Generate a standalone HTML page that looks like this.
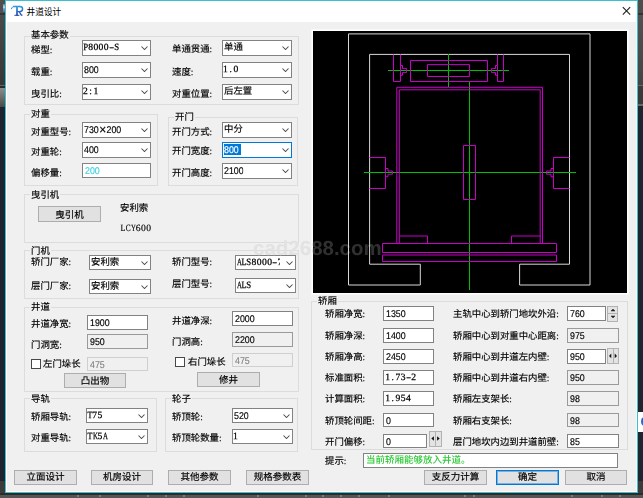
<!DOCTYPE html><html lang="zh-CN"><head><meta charset="utf-8"><title>井道设计</title><style>
html,body{margin:0;padding:0}
body{width:643px;height:498px;overflow:hidden;position:relative;background:#3c3c3c;font-family:"Liberation Sans","Noto Sans CJK SC",sans-serif;font-size:12px;color:#000}
div,span,svg{position:absolute;box-sizing:border-box}
.bg{left:0;top:0;width:643px;height:498px}
.win{left:5px;top:0;width:633px;height:493px;background:#f0f0f0;border:1px solid #3cc0cb}
.frame{left:6px;top:1px;width:631px;height:491px;border:1px solid #fff;border-top:none}
.title{left:6px;top:1px;width:631px;height:21px;background:#fff}
.tt{left:26.5px;top:4.5px;font:8.7px/14px "Liberation Sans","Noto Sans CJK SC",sans-serif;white-space:nowrap}
.l{font:9.4px/12px "Liberation Serif","Noto Sans CJK SC",sans-serif;white-space:nowrap;color:#000;letter-spacing:0}
.g{border:1px solid #dcdcdc;border-radius:0}
.gl{font:9.4px/12px "Liberation Serif","Noto Sans CJK SC",sans-serif;background:#f0f0f0;white-space:nowrap;padding:0 1px}
.cb{background:#fff;border:1px solid #828282}
.cb.f{border-color:#0078d7}
.tb{background:#fff;border:1px solid #828282}
.tb.d{background:#f0f0f0;border-color:#9a9a9a}
.tb.dd{background:#f0f0f0;border-color:#cfcfcf;color:#838383}
.v{left:1px;top:-1px;white-space:nowrap}
.vs{font:9.6px/13px "Liberation Serif","Noto Sans CJK SC",serif;top:-0.5px;left:-0.2px;-webkit-text-stroke:0.25px #000}
.cb .v{max-width:calc(100% - 14.5px);overflow:hidden;height:13px}
.vc{font:9.4px/13px "Liberation Serif","Noto Sans CJK SC",sans-serif;top:1.2px !important}
.vs i,.l i{position:static;display:inline-block;font-style:normal;text-align:center}
.vs b,.l b{position:static;display:inline-block;font-weight:normal}
.vn{font:9.6px/13px "Liberation Sans","Noto Sans CJK SC",sans-serif;top:0.5px;-webkit-text-stroke:0.15px currentColor;transform:scale(0.92,1.02);transform-origin:0 60%}
.tb .vn{left:2px}
.tb .vs{left:1px;top:-0.3px}
.vn i{position:static;display:inline-block;font-style:normal;text-align:center}
.btn{background:#e1e1e1;border:1px solid #adadad;text-align:center;font:9.5px/14px "Liberation Serif","Noto Sans CJK SC",sans-serif;white-space:nowrap}
.btn.def{border:1px solid #0078d7;box-shadow:inset 0 0 0 1px rgba(0,120,215,.45)}
.l,.gl,.btn,.vc{-webkit-text-stroke:0.16px #000}
.chk{background:#fff;border:1px solid #484848}
.sp{background:#e3e3e3;border:1px solid #b2b2b2}
</style></head><body>
<div class="bg">
<div style="left:0;top:0;width:5px;height:13px;background:#4f4f4f"></div>
<div style="left:0;top:13px;width:5px;height:2px;background:#343434"></div>
<div style="left:0;top:15px;width:5px;height:70px;background:linear-gradient(#4b4a4a,#373737)"></div>
<div style="left:0;top:85px;width:5px;height:1px;background:#646464"></div>
<div style="left:0;top:86px;width:5px;height:2px;background:#2a2a2a"></div>
<div style="left:0;top:88px;width:5px;height:19px;background:linear-gradient(#8c8c8c,#4a4a4a)"></div>
<div style="left:0;top:107px;width:5px;height:374px;background:#1f2530"></div>
<div style="left:0;top:481px;width:5px;height:17px;background:#3b3b3b"></div>
<div style="left:3px;top:4px;width:2px;height:8px;background:linear-gradient(#6f7f9f,#cfd6e4 40%,#7f93bf 60%,#55699a)"></div>
<div style="left:638px;top:0;width:5px;height:13px;background:#4d4d4d"></div>
<div style="left:638px;top:13px;width:5px;height:2px;background:#333"></div>
<div style="left:638px;top:15px;width:5px;height:70px;background:linear-gradient(#525252,#444)"></div>
<div style="left:638px;top:85px;width:5px;height:1px;background:#666"></div>
<div style="left:638px;top:86px;width:5px;height:18px;background:#3a3a3a"></div>
<div style="left:638px;top:104px;width:5px;height:2px;background:#6a6a6a"></div>
<div style="left:638px;top:106px;width:5px;height:375px;background:#1f2530"></div>
<div style="left:638px;top:481px;width:5px;height:17px;background:#3b3b3b"></div>
<div style="left:638px;top:412px;width:5px;height:20px;background:#fff;overflow:hidden"><div style="left:3px;top:5px;width:7px;height:9px;border-radius:50%;background:#1d6ae5"></div></div>
<div style="left:0;top:493px;width:643px;height:2px;background:#2b2b2b"></div>
<div style="left:0;top:495px;width:643px;height:3px;background:#555"></div>
<div style="left:77px;top:495px;width:2px;height:2px;background:#7c7c7c"></div><div style="left:99px;top:495px;width:2px;height:2px;background:#7c7c7c"></div><div style="left:147px;top:495px;width:2px;height:2px;background:#7c7c7c"></div><div style="left:165px;top:495px;width:2px;height:2px;background:#7c7c7c"></div><div style="left:183px;top:495px;width:2px;height:2px;background:#7c7c7c"></div><div style="left:257px;top:495px;width:2px;height:2px;background:#7c7c7c"></div><div style="left:305px;top:495px;width:2px;height:2px;background:#7c7c7c"></div><div style="left:322px;top:495px;width:2px;height:2px;background:#7c7c7c"></div><div style="left:340px;top:495px;width:2px;height:2px;background:#7c7c7c"></div><div style="left:358px;top:495px;width:2px;height:2px;background:#7c7c7c"></div><div style="left:388px;top:495px;width:2px;height:2px;background:#7c7c7c"></div><div style="left:464px;top:495px;width:2px;height:2px;background:#7c7c7c"></div><div style="left:473px;top:495px;width:2px;height:2px;background:#7c7c7c"></div><div style="left:571px;top:495px;width:2px;height:2px;background:#7c7c7c"></div><div style="left:601px;top:495px;width:2px;height:2px;background:#7c7c7c"></div><div style="left:619px;top:495px;width:2px;height:2px;background:#7c7c7c"></div>
</div>
<div class="win"></div><div class="title"></div><div class="frame"></div>
<svg style="left:10px;top:4px" width="15" height="14" viewBox="10 4 15 14" fill="none"><defs><linearGradient id="tg" gradientUnits="userSpaceOnUse" x1="0" y1="6" x2="0" y2="16"><stop offset="0" stop-color="#2b9fe0"/><stop offset="1" stop-color="#2340a8"/></linearGradient></defs><g stroke="url(#tg)" stroke-linecap="round" stroke-linejoin="round"><path d="M11.5 8.7 C11.9 7.2 12.8 6.5 14.2 6.5" stroke-width="1"/><path d="M13.6 6.5 H20.2" stroke-width="1.35"/><path d="M17 6.9 V15" stroke-width="1.7"/><path d="M14.8 15.3 H19" stroke-width="1"/><path d="M19.8 6.5 C22 6.5 22.6 7.9 22.6 9.1 C22.6 10.7 21.6 11.6 19.6 11.6 H17.6" stroke-width="1.4"/><path d="M19.3 11.8 L21.4 15.1 H22" stroke-width="1.3"/></g></svg>
<div class="tt">井道设计</div>
<svg style="left:620px;top:5px" width="13" height="12" viewBox="620 5 13 12"><path d="M622.8 7.2 L630.2 14.6 M630.2 7.2 L622.8 14.6" stroke="#1c1c1c" stroke-width="1.05" fill="none"/></svg>
<div id="c" style="left:0;top:0;width:643px;height:498px;will-change:transform;text-rendering:geometricPrecision">
<div class="g" style="left:24px;top:36px;width:275px;height:69px"></div>
<div class="gl" style="left:30px;top:30px">基本参数</div>
<div class="l" style="left:31px;top:44.8px;">梯型:</div>
<div class="cb" style="left:82px;top:40px;width:69px;height:16px"><span class="v vs"><i style="width:5.2px"><b style="transform:scaleX(0.918)">P</b></i><i style="width:5.2px">8</i><i style="width:5.2px">0</i><i style="width:5.2px">0</i><i style="width:5.2px">0</i><i style="width:5.2px"><b style="transform:scaleX(1.5)">-</b></i><i style="width:5.2px"><b style="transform:scaleX(0.918)">S</b></i></span><svg style="right:2.5px;top:5.0px" width="7" height="4" viewBox="0 0 7 4"><path d="M0.5 0.5 L3.5 3.5 L6.5 0.5" stroke="#4a4a4a" stroke-width="1.05" fill="none"/></svg></div>
<div class="l" style="left:31px;top:66.8px;">载重:</div>
<div class="cb" style="left:82px;top:62px;width:69px;height:16px"><span class="v vn">800</span><svg style="right:2.5px;top:5.0px" width="7" height="4" viewBox="0 0 7 4"><path d="M0.5 0.5 L3.5 3.5 L6.5 0.5" stroke="#4a4a4a" stroke-width="1.05" fill="none"/></svg></div>
<div class="l" style="left:31px;top:88.8px;">曳引比:</div>
<div class="cb" style="left:82px;top:84px;width:69px;height:16px"><span class="v vs"><i style="width:5.2px">2</i><i style="width:5.2px">:</i><i style="width:5.2px">1</i></span><svg style="right:2.5px;top:5.0px" width="7" height="4" viewBox="0 0 7 4"><path d="M0.5 0.5 L3.5 3.5 L6.5 0.5" stroke="#4a4a4a" stroke-width="1.05" fill="none"/></svg></div>
<div class="l" style="left:172px;top:43.8px;">单通贯通:</div>
<div class="cb" style="left:222px;top:40px;width:70px;height:16px"><span class="v vc">单通</span><svg style="right:2.5px;top:5.0px" width="7" height="4" viewBox="0 0 7 4"><path d="M0.5 0.5 L3.5 3.5 L6.5 0.5" stroke="#4a4a4a" stroke-width="1.05" fill="none"/></svg></div>
<div class="l" style="left:172px;top:66.8px;">速度:</div>
<div class="cb" style="left:222px;top:62px;width:70px;height:16px"><span class="v vs"><i style="width:5.2px">1</i><i style="width:5.2px">.</i><i style="width:5.2px">0</i></span><svg style="right:2.5px;top:5.0px" width="7" height="4" viewBox="0 0 7 4"><path d="M0.5 0.5 L3.5 3.5 L6.5 0.5" stroke="#4a4a4a" stroke-width="1.05" fill="none"/></svg></div>
<div class="l" style="left:172px;top:88.8px;">对重位置:</div>
<div class="cb" style="left:222px;top:84px;width:70px;height:16px"><span class="v vc">后左置</span><svg style="right:2.5px;top:5.0px" width="7" height="4" viewBox="0 0 7 4"><path d="M0.5 0.5 L3.5 3.5 L6.5 0.5" stroke="#4a4a4a" stroke-width="1.05" fill="none"/></svg></div>
<div class="g" style="left:24px;top:114px;width:134px;height:72px"></div>
<div class="gl" style="left:30px;top:109px">对重</div>
<div class="l" style="left:31px;top:126.8px;">对重型号:</div>
<div class="cb" style="left:82px;top:122px;width:69px;height:16px"><span class="v vn">730<i style="width:8.5px;font-size:13px;line-height:10px;vertical-align:-1px">×</i>200</span><svg style="right:2.5px;top:5.0px" width="7" height="4" viewBox="0 0 7 4"><path d="M0.5 0.5 L3.5 3.5 L6.5 0.5" stroke="#4a4a4a" stroke-width="1.05" fill="none"/></svg></div>
<div class="l" style="left:31px;top:146.8px;">对重轮:</div>
<div class="cb" style="left:82px;top:142px;width:69px;height:16px"><span class="v vn">400</span><svg style="right:2.5px;top:5.0px" width="7" height="4" viewBox="0 0 7 4"><path d="M0.5 0.5 L3.5 3.5 L6.5 0.5" stroke="#4a4a4a" stroke-width="1.05" fill="none"/></svg></div>
<div class="l" style="left:31px;top:167.8px;">偏移量:</div>
<div class="tb " style="left:82px;top:163px;width:69px;height:15px"><span class="v vn" style="color:#3fd0e0;">200</span></div>
<div class="g" style="left:168px;top:117px;width:130px;height:69px"></div>
<div class="gl" style="left:174px;top:112px">开门</div>
<div class="l" style="left:172px;top:126.8px;">开门方式:</div>
<div class="cb" style="left:222px;top:122px;width:70px;height:16px"><span class="v vc">中分</span><svg style="right:2.5px;top:5.0px" width="7" height="4" viewBox="0 0 7 4"><path d="M0.5 0.5 L3.5 3.5 L6.5 0.5" stroke="#4a4a4a" stroke-width="1.05" fill="none"/></svg></div>
<div class="l" style="left:172px;top:145.8px;">开门宽度:</div>
<div class="cb f" style="left:222px;top:142px;width:70px;height:16px"><span style="left:1px;top:1px;width:17px;height:11px;background:#0078d7"></span><span class="v vn" style="color:#fff">800</span><svg style="right:2.5px;top:5.0px" width="7" height="4" viewBox="0 0 7 4"><path d="M0.5 0.5 L3.5 3.5 L6.5 0.5" stroke="#4a4a4a" stroke-width="1.05" fill="none"/></svg></div>
<div class="l" style="left:172px;top:167.8px;">开门高度:</div>
<div class="cb" style="left:222px;top:163px;width:70px;height:16px"><span class="v vn">2100</span><svg style="right:2.5px;top:5.0px" width="7" height="4" viewBox="0 0 7 4"><path d="M0.5 0.5 L3.5 3.5 L6.5 0.5" stroke="#4a4a4a" stroke-width="1.05" fill="none"/></svg></div>
<div class="g" style="left:24px;top:194px;width:275px;height:49px"></div>
<div class="gl" style="left:30px;top:190px">曳引机</div>
<div class="btn" style="left:38px;top:206px;width:63px;height:16px;padding-top:1.5px">曳引机</div>
<div class="l" style="left:120px;top:202.8px;">安利索</div>
<div class="l" style="left:120px;top:223.20000000000002px;font-size:9.6px"><i style="width:5.2px"><b style="transform:scaleX(0.835)">L</b></i><i style="width:5.2px"><b style="transform:scaleX(0.765)">C</b></i><i style="width:5.2px"><b style="transform:scaleX(0.707)">Y</b></i><i style="width:5.2px">6</i><i style="width:5.2px">0</i><i style="width:5.2px">0</i></div>
<div class="g" style="left:24px;top:250px;width:275px;height:49px"></div>
<div class="gl" style="left:30px;top:246px">门机</div>
<div class="l" style="left:31px;top:256.8px;">轿门厂家:</div>
<div class="cb" style="left:89px;top:255px;width:62px;height:15px"><span class="v vc">安利索</span><svg style="right:2.5px;top:4.5px" width="7" height="4" viewBox="0 0 7 4"><path d="M0.5 0.5 L3.5 3.5 L6.5 0.5" stroke="#4a4a4a" stroke-width="1.05" fill="none"/></svg></div>
<div class="l" style="left:31px;top:280.8px;">层门厂家:</div>
<div class="cb" style="left:89px;top:279px;width:62px;height:15px"><span class="v vc">安利索</span><svg style="right:2.5px;top:4.5px" width="7" height="4" viewBox="0 0 7 4"><path d="M0.5 0.5 L3.5 3.5 L6.5 0.5" stroke="#4a4a4a" stroke-width="1.05" fill="none"/></svg></div>
<div class="l" style="left:172px;top:256.8px;">轿门型号:</div>
<div class="cb" style="left:235px;top:255px;width:61px;height:15px"><span class="v vs"><i style="width:5.2px"><b style="transform:scaleX(0.707)">A</b></i><i style="width:5.2px"><b style="transform:scaleX(0.835)">L</b></i><i style="width:5.2px"><b style="transform:scaleX(0.918)">S</b></i><i style="width:5.2px">8</i><i style="width:5.2px">0</i><i style="width:5.2px">0</i><i style="width:5.2px">0</i><i style="width:5.2px"><b style="transform:scaleX(1.5)">-</b></i><i style="width:5.2px">7</i></span><svg style="right:2.5px;top:4.5px" width="7" height="4" viewBox="0 0 7 4"><path d="M0.5 0.5 L3.5 3.5 L6.5 0.5" stroke="#4a4a4a" stroke-width="1.05" fill="none"/></svg></div>
<div class="l" style="left:172px;top:278.8px;">层门型号:</div>
<div class="cb" style="left:235px;top:278px;width:61px;height:15px"><span class="v vs"><i style="width:5.2px"><b style="transform:scaleX(0.707)">A</b></i><i style="width:5.2px"><b style="transform:scaleX(0.835)">L</b></i><i style="width:5.2px"><b style="transform:scaleX(0.918)">S</b></i></span><svg style="right:2.5px;top:4.5px" width="7" height="4" viewBox="0 0 7 4"><path d="M0.5 0.5 L3.5 3.5 L6.5 0.5" stroke="#4a4a4a" stroke-width="1.05" fill="none"/></svg></div>
<div class="g" style="left:24px;top:307px;width:275px;height:85px"></div>
<div class="gl" style="left:30px;top:302px">井道</div>
<div class="l" style="left:31px;top:318.8px;">井道净宽:</div>
<div class="tb " style="left:87px;top:315px;width:61px;height:15px"><span class="v vn" style="">1900</span></div>
<div class="l" style="left:31px;top:339.8px;">门洞宽:</div>
<div class="tb d" style="left:87px;top:334px;width:61px;height:15px"><span class="v vn" style="">950</span></div>
<div class="chk" style="left:31px;top:359px;width:10px;height:10px"></div>
<div class="l" style="left:43px;top:358.8px;">左门垛长</div>
<div class="tb dd" style="left:87px;top:357px;width:61px;height:14px"><span class="v vn" style="">475</span></div>
<div class="btn" style="left:64px;top:373px;width:62px;height:15px;padding-top:1px">凸出物</div>
<div class="l" style="left:172px;top:315.8px;">井道净深:</div>
<div class="tb " style="left:232px;top:311px;width:61px;height:15px"><span class="v vn" style="">2000</span></div>
<div class="l" style="left:172px;top:336.8px;">门洞高:</div>
<div class="tb d" style="left:232px;top:332px;width:61px;height:15px"><span class="v vn" style="">2200</span></div>
<div class="chk" style="left:175px;top:357px;width:10px;height:10px"></div>
<div class="l" style="left:188px;top:356.8px;">右门垛长</div>
<div class="tb dd" style="left:232px;top:353px;width:61px;height:14px"><span class="v vn" style="">475</span></div>
<div class="btn" style="left:197px;top:372px;width:63px;height:15px;padding-top:0.8px">修井</div>
<div class="g" style="left:24px;top:398px;width:133px;height:54px"></div>
<div class="gl" style="left:30px;top:394px">导轨</div>
<div class="l" style="left:31px;top:411.8px;">轿厢导轨:</div>
<div class="cb" style="left:86px;top:408px;width:62px;height:15px"><span class="v vs"><i style="width:5.2px"><b style="transform:scaleX(0.835)">T</b></i><i style="width:5.2px">7</i><i style="width:5.2px">5</i></span><svg style="right:2.5px;top:4.5px" width="7" height="4" viewBox="0 0 7 4"><path d="M0.5 0.5 L3.5 3.5 L6.5 0.5" stroke="#4a4a4a" stroke-width="1.05" fill="none"/></svg></div>
<div class="l" style="left:31px;top:432.8px;">对重导轨:</div>
<div class="cb" style="left:86px;top:429px;width:62px;height:15px"><span class="v vs"><i style="width:5.2px"><b style="transform:scaleX(0.835)">T</b></i><i style="width:5.2px"><b style="transform:scaleX(0.707)">K</b></i><i style="width:5.2px">5</i><i style="width:5.2px"><b style="transform:scaleX(0.707)">A</b></i></span><svg style="right:2.5px;top:4.5px" width="7" height="4" viewBox="0 0 7 4"><path d="M0.5 0.5 L3.5 3.5 L6.5 0.5" stroke="#4a4a4a" stroke-width="1.05" fill="none"/></svg></div>
<div class="g" style="left:165px;top:398px;width:133px;height:54px"></div>
<div class="gl" style="left:171px;top:394px">轮子</div>
<div class="l" style="left:172px;top:411.8px;">轿顶轮:</div>
<div class="cb" style="left:232px;top:408px;width:61px;height:15px"><span class="v vn">520</span><svg style="right:2.5px;top:4.5px" width="7" height="4" viewBox="0 0 7 4"><path d="M0.5 0.5 L3.5 3.5 L6.5 0.5" stroke="#4a4a4a" stroke-width="1.05" fill="none"/></svg></div>
<div class="l" style="left:172px;top:432.8px;">轿顶轮数量:</div>
<div class="cb" style="left:232px;top:429px;width:61px;height:15px"><span class="v vs"><i style="width:5.2px">1</i></span><svg style="right:2.5px;top:4.5px" width="7" height="4" viewBox="0 0 7 4"><path d="M0.5 0.5 L3.5 3.5 L6.5 0.5" stroke="#4a4a4a" stroke-width="1.05" fill="none"/></svg></div>
<div class="btn" style="left:14px;top:470px;width:63px;height:15px;padding-top:0.4px">立面设计</div>
<div class="btn" style="left:91px;top:470px;width:62px;height:15px;padding-top:0.4px">机房设计</div>
<div class="btn" style="left:168px;top:470px;width:63px;height:15px;padding-top:0.4px">其他参数</div>
<div class="btn" style="left:246px;top:470px;width:63px;height:15px;padding-top:0.4px">规格参数表</div>
<div style="left:312px;top:30px;width:316px;height:264px;border:1px solid #fff;box-shadow:0 0 0 1px rgba(255,255,255,.55);background:#000"></div>
<svg style="left:313px;top:31px" width="315" height="262" viewBox="313 31 315 262" fill="none" stroke-width="1"><text x="253" y="254.9" font-family="Liberation Sans,sans-serif" font-weight="bold" font-size="20.5" fill="#303030" stroke="none">cad2688.com</text><path stroke="#d8d8d8" d="M348.5 33.9 H590 V285 H519.6 V264.2 H569.5 V54.4 H369.6 V264.2 H420.3 V285 H348.5 V33.9"/><path stroke="#00c000" d="M388 70.5 H509 M448.5 54 V87 M469.5 82 V290 M364 172.5 H576"/><path stroke="#c800c8" d="M410.5 60.5 H487.5 V81.5 H410.5 Z M427.5 64.6 H469.6 V76.5 H427.5 Z M393.5 54.5 V81.5 H400.5 V54.5 M400.5 65.5 H402.5 V68.6 H406.6 V72.4 H402.5 V75.3 H400.5 M497.5 54.5 V81.5 H503.5 V54.5 M497.5 65.5 H495.5 V68.6 H491.4 V72.4 H495.5 V75.3 H497.5 M396.8 87.3 H542.5 V243.5 H396.8 Z M399.3 243.5 V89.8 H540.2 V243.5 M399.5 236 H427.5 V243.5 M540.5 236 H511.5 V243.5 M382.5 243.5 H556.5 V252.5 H382.5 Z M382.5 255 H556.5 V261.5 H382.5 Z M463.5 145.5 H475.5 V199.5 H463.5 Z M369.5 157.5 H385.5 V188.5 H369.5 M385.5 168.5 H388 V171 H392.4 V174.2 H388 V176.7 H385.5 M569.5 157.5 H553.5 V188.5 H569.5 M553.5 168.5 H551 V171 H546.6 V174.2 H551 V176.7 H553.5"/></svg>
<svg style="left:250px;top:232px" width="63" height="30" viewBox="250 232 63 30"><text x="253" y="254.9" font-family="Liberation Sans,sans-serif" font-weight="bold" font-size="20.5" fill="#e2e2e2">cad2688.com</text></svg>
<div class="g" style="left:311px;top:301px;width:317px;height:149px"></div>
<div class="gl" style="left:317px;top:296px">轿厢</div>
<div class="l" style="left:325px;top:309.3px;">轿厢净宽:</div>
<div class="tb " style="left:383px;top:306px;width:51px;height:15px"><span class="v vn" style="">1350</span></div>
<div class="l" style="left:325px;top:331.3px;">轿厢净深:</div>
<div class="tb " style="left:383px;top:328px;width:51px;height:15px"><span class="v vn" style="">1400</span></div>
<div class="l" style="left:325px;top:352.3px;">轿厢净高:</div>
<div class="tb " style="left:383px;top:349px;width:51px;height:15px"><span class="v vn" style="">2450</span></div>
<div class="l" style="left:325px;top:373.3px;">标准面积:</div>
<div class="tb " style="left:383px;top:370px;width:51px;height:15px"><span class="v vs" style=""><i style="width:5.2px">1</i><i style="width:5.2px">.</i><i style="width:5.2px">7</i><i style="width:5.2px">3</i><i style="width:5.2px"><b style="transform:scaleX(1.5)">-</b></i><i style="width:5.2px">2</i></span></div>
<div class="l" style="left:325px;top:394.3px;">计算面积:</div>
<div class="tb " style="left:383px;top:391px;width:51px;height:15px"><span class="v vs" style=""><i style="width:5.2px">1</i><i style="width:5.2px">.</i><i style="width:5.2px">9</i><i style="width:5.2px">5</i><i style="width:5.2px">4</i></span></div>
<div class="l" style="left:325px;top:416.3px;">轿顶轮间距:</div>
<div class="tb " style="left:383px;top:413px;width:51px;height:14px"><span class="v vn" style="">0</span></div>
<div class="l" style="left:325px;top:437.3px;">开门偏移:</div>
<div class="tb " style="left:383px;top:434px;width:44px;height:14px"><span class="v vn" style="">0</span></div>
<div class="l" style="left:453px;top:308.8px;">主轨中心到轿门地坎外沿:</div>
<div class="tb " style="left:567px;top:306px;width:39px;height:15px"><span class="v vn" style="">760</span></div>
<div class="l" style="left:453px;top:330.8px;">轿厢中心到对重中心距离:</div>
<div class="tb d" style="left:567px;top:328px;width:52px;height:15px"><span class="v vn" style="">975</span></div>
<div class="l" style="left:453px;top:351.8px;">轿厢中心到井道左内壁:</div>
<div class="tb " style="left:567px;top:349px;width:39px;height:15px"><span class="v vn" style="">950</span></div>
<div class="l" style="left:453px;top:372.8px;">轿厢中心到井道右内壁:</div>
<div class="tb d" style="left:567px;top:370px;width:52px;height:15px"><span class="v vn" style="">950</span></div>
<div class="l" style="left:453px;top:393.8px;">轿厢左支架长:</div>
<div class="tb d" style="left:567px;top:391px;width:52px;height:15px"><span class="v vn" style="">98</span></div>
<div class="l" style="left:453px;top:415.8px;">轿厢右支架长:</div>
<div class="tb d" style="left:567px;top:413px;width:52px;height:14px"><span class="v vn" style="">98</span></div>
<div class="l" style="left:453px;top:436.8px;">层门地坎内边到井道前壁:</div>
<div class="tb " style="left:567px;top:434px;width:52px;height:14px"><span class="v vn" style="">85</span></div>
<div class="sp" style="left:607px;top:306px;width:11px;height:8px"></div><div class="sp" style="left:607px;top:313px;width:11px;height:9px"></div>
<svg style="left:608px;top:306px" width="10" height="15" viewBox="0 0 10 15"><path d="M3 5 L5 3 L7 5 Z M3 10 L5 12 L7 10 Z" fill="#222" stroke="#222" stroke-width="0.5"/></svg>
<div class="sp" style="left:607px;top:348px;width:7px;height:16px"></div><div class="sp" style="left:613px;top:348px;width:6px;height:16px"></div>
<svg style="left:607px;top:348px" width="12" height="16" viewBox="0 0 12 16"><path d="M4.3 5.5 L2 7.9 L4.3 10.3 Z M7.7 5.5 L10 7.9 L7.7 10.3 Z" fill="#111"/></svg>
<div class="sp" style="left:429px;top:431px;width:7px;height:16px"></div><div class="sp" style="left:435px;top:431px;width:7px;height:16px"></div>
<svg style="left:429px;top:431px" width="13" height="16" viewBox="0 0 13 16"><path d="M4.9 5.2 L2.3 7.5 L4.9 9.8 Z M8.1 5.2 L10.7 7.5 L8.1 9.8 Z" fill="#111"/></svg>
<div class="l" style="left:325px;top:455.8px;">提示:</div>
<div class="tb" style="left:363px;top:453px;width:255px;height:15px"><span class="v" style="top:1.1px;left:2px;font:500 9.5px/13px 'Liberation Serif','Noto Sans CJK SC',sans-serif;color:#2fca3a">当前轿厢能够放入井道。</span></div>
<div class="btn" style="left:424px;top:470px;width:63px;height:15px;padding-top:0.4px">支反力计算</div>
<div class="btn def" style="left:496px;top:470px;width:63px;height:15px;padding-top:0.4px">确定</div>
<div class="btn" style="left:565px;top:470px;width:62px;height:15px;padding-top:0.4px">取消</div>
</div>
</body></html>
